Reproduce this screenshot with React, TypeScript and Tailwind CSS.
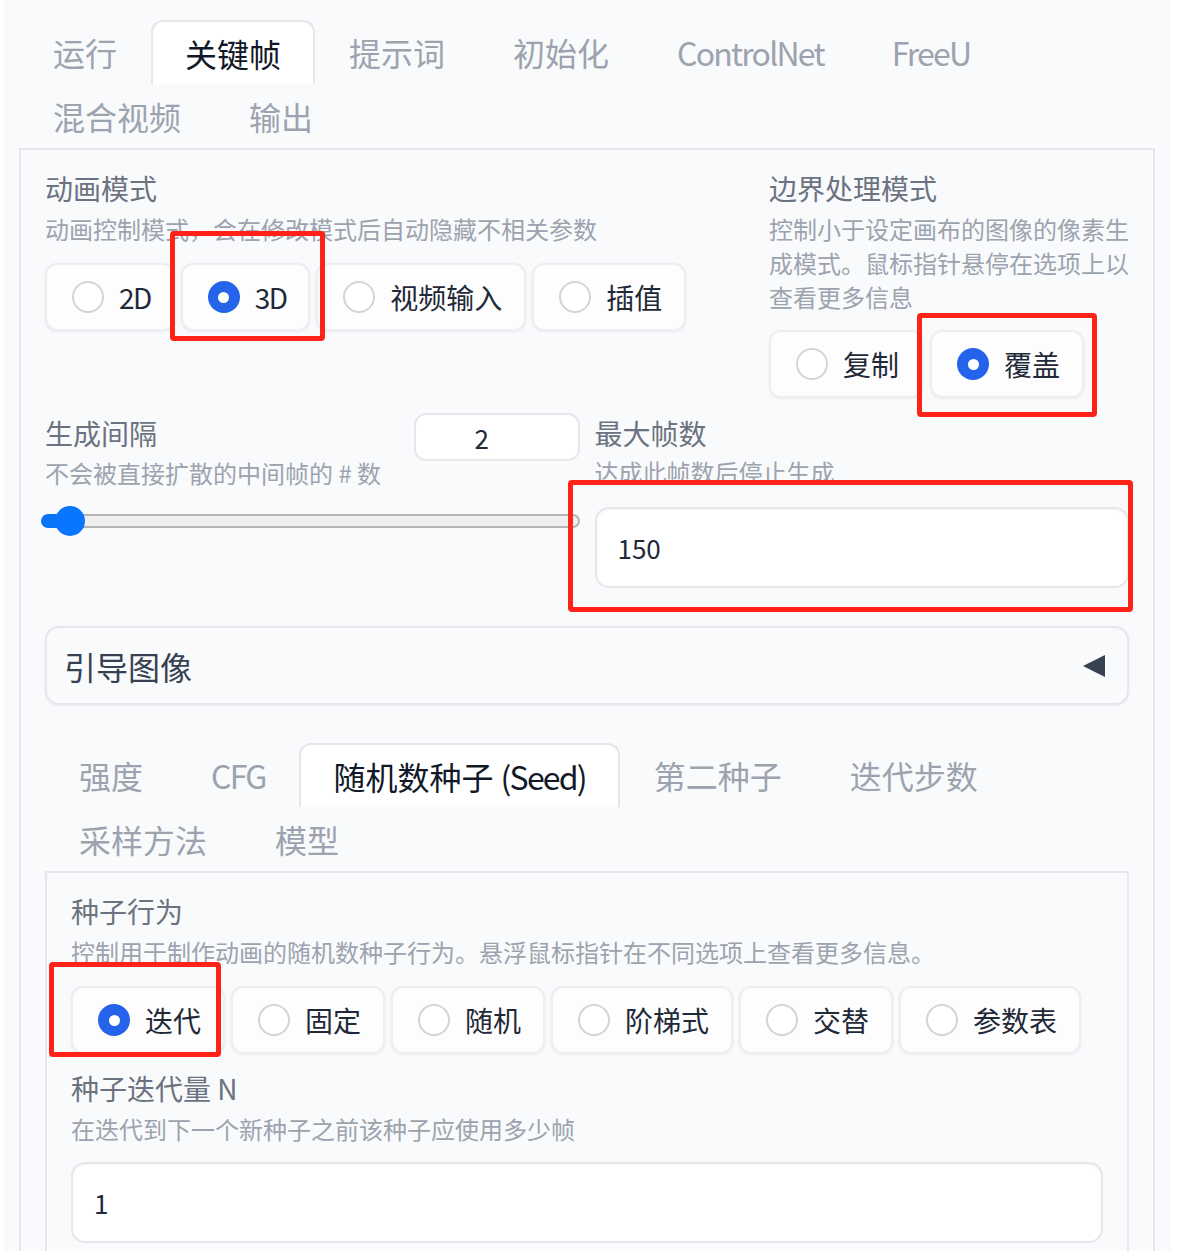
import React from "react";

const FONT = 'font-["Noto_Sans_CJK_SC","Noto_Sans",sans-serif]';

// 拉丁字符略微收紧，贴近参考图的字宽
function tx(s: string) {
  return s.split(/([A-Za-z0-9()]+)/).map((part, i) =>
    /^[A-Za-z0-9()]+$/.test(part) ? (
      <span key={i} className="tracking-[-0.056em]">
        {part}
      </span>
    ) : (
      part
    )
  );
}

function Tabs({ items, active }: { items: string[]; active: string }) {
  return (
    <div className="flex flex-wrap">
      {items.map((t) =>
        t === active ? (
          <div
            key={t}
            className="flex h-[64px] items-center rounded-t-[12px] border-2 border-b-0 border-[#e5e7eb] bg-white px-[32px] text-[32px] text-[#111827]"
          >
            <span>{tx(t)}</span>
          </div>
        ) : (
          <div key={t} className="flex h-[64px] items-center px-[34px] text-[32px] text-[#9ca3af]">
            <span>{tx(t)}</span>
          </div>
        )
      )}
    </div>
  );
}

function Radio({ label, checked }: { label: string; checked?: boolean }) {
  return (
    <div className="flex h-[68px] items-center gap-[15px] rounded-[12px] border-2 border-[#eceef1] bg-[#fdfdfe] pl-[25px] pr-[22px] shadow-[0_1px_3px_rgba(0,0,0,0.06)]">
      {checked ? (
        <span className="flex h-[32px] w-[32px] items-center justify-center rounded-full bg-[#2563eb]">
          <span className="h-[11px] w-[11px] rounded-full bg-white" />
        </span>
      ) : (
        <span className="h-[32px] w-[32px] rounded-full border-2 border-[#d1d5db] bg-white" />
      )}
      <span className="text-[28px] leading-none text-[#1f2937]">{tx(label)}</span>
    </div>
  );
}

function Label({ children }: { children: string }) {
  return <div className="text-[28px] leading-[40px] text-[#6b7280]">{tx(children)}</div>;
}

function Info({ children, className = "" }: { children: string; className?: string }) {
  return <div className={`text-[24px] leading-[34px] text-[#9ca3af] ${className}`}>{children}</div>;
}

function TextBox({ value }: { value: string }) {
  return (
    <div className="flex h-[81px] items-center rounded-[14px] border-2 border-[#e5e7eb] bg-white pl-[21px] text-[26px] text-[#1f2937] shadow-[inset_0_1px_2px_rgba(0,0,0,0.05)]">
      {value}
    </div>
  );
}

function Slider() {
  return (
    <div className="relative mt-[16px] flex h-[30px] items-center">
      <div className="h-[14px] w-full rounded-full border-2 border-[#b5b5b5] bg-[#efefef]" />
      <div className="absolute left-[-4px] top-[8px] h-[14px] w-[30px] rounded-l-full bg-[#0a74f5]" />
      <div className="absolute left-[10px] top-0 h-[30px] w-[30px] rounded-full bg-[#0a75ff]" />
    </div>
  );
}

function RedBox({ className }: { className: string }) {
  return <div className={`pointer-events-none absolute rounded-[4px] border-[5px] border-[#ff2216] ${className}`} />;
}

export default function App() {
  return (
    <div className={`relative min-h-[1251px] w-[1179px] overflow-hidden bg-white ${FONT}`}>
      <div className="ml-[4px] min-h-[1251px] w-[1167px] bg-[#f9fafb] pl-[15px] pr-[16px] pt-[20px]">
        <Tabs
          items={["运行", "关键帧", "提示词", "初始化", "ControlNet", "FreeU", "混合视频", "输出"]}
          active="关键帧"
        />
        <div className="border-2 border-[#e5e7eb] px-[24px] pb-[40px] pt-[18px]">
          {/* 动画模式 / 边界处理模式 */}
          <div className="grid grid-cols-[700px_360px] gap-x-[24px]">
            <div>
              <Label>动画模式</Label>
              <Info className="mt-[4px]">动画控制模式，会在修改模式后自动隐藏不相关参数</Info>
              <div className="mt-[17px] flex gap-[6px]">
                <Radio label="2D" />
                <Radio label="3D" checked />
                <Radio label="视频输入" />
                <Radio label="插值" />
              </div>
            </div>
            <div>
              <Label>边界处理模式</Label>
              <Info className="mt-[4px]">控制小于设定画布的图像的像素生成模式。鼠标指针悬停在选项上以查看更多信息</Info>
              <div className="mt-[16px] flex gap-[7px]">
                <Radio label="复制" />
                <Radio label="覆盖" checked />
              </div>
            </div>
          </div>

          {/* 生成间隔 / 最大帧数 */}
          <div className="mt-[15px] grid grid-cols-2 gap-x-[15px]">
            <div>
              <div className="flex items-start justify-between">
                <div>
                  <Label>生成间隔</Label>
                  <Info className="mt-[3px]">不会被直接扩散的中间帧的 # 数</Info>
                </div>
                <div className="flex h-[48px] w-[166px] items-center rounded-[12px] border-2 border-[#e5e7eb] bg-white pl-[59px] text-[26px] text-[#1f2937]">
                  2
                </div>
              </div>
              <Slider />
            </div>
            <div>
              <Label>最大帧数</Label>
              <Info className="mt-[2px]">达成此帧数后停止生成</Info>
              <div className="mt-[18px]">
                <TextBox value="150" />
              </div>
            </div>
          </div>

          {/* 引导图像 */}
          <div className="mt-[38px] flex h-[79px] items-center justify-between rounded-[14px] border-2 border-[#e5e7eb] bg-[#f9fafb] pl-[17px] pr-[22px] shadow-[0_1px_3px_rgba(0,0,0,0.06)]">
            <span className="text-[32px] text-[#374151]">引导图像</span>
            <svg width="22" height="22" viewBox="0 0 22 22">
              <polygon points="0,11 22,0 22,22" fill="#374151" />
            </svg>
          </div>

          {/* 内部标签页 */}
          <div className="mt-[38px]">
            <Tabs
              items={["强度", "CFG", "随机数种子 (Seed)", "第二种子", "迭代步数", "采样方法", "模型"]}
              active="随机数种子 (Seed)"
            />
            <div className="border-2 border-[#e5e7eb] px-[24px] pb-[40px] pt-[18px]">
              <Label>种子行为</Label>
              <Info className="mt-[4px]">控制用于制作动画的随机数种子行为。悬浮鼠标指针在不同选项上查看更多信息。</Info>
              <div className="mt-[17px] flex gap-[6px]">
                <Radio label="迭代" checked />
                <Radio label="固定" />
                <Radio label="随机" />
                <Radio label="阶梯式" />
                <Radio label="交替" />
                <Radio label="参数表" />
              </div>
              <div className="mt-[14px]">
                <Label>种子迭代量 N</Label>
                <Info className="mt-[4px]">在迭代到下一个新种子之前该种子应使用多少帧</Info>
                <div className="mt-[16px]">
                  <TextBox value="1" />
                </div>
              </div>
            </div>
          </div>
        </div>
      </div>

      {/* 标注框 */}
      <RedBox className="left-[170px] top-[231px] h-[110px] w-[155px]" />
      <RedBox className="left-[917px] top-[313px] h-[104px] w-[180px]" />
      <RedBox className="left-[568px] top-[480px] h-[132px] w-[565px]" />
      <RedBox className="left-[49px] top-[962px] h-[95px] w-[172px]" />
    </div>
  );
}
